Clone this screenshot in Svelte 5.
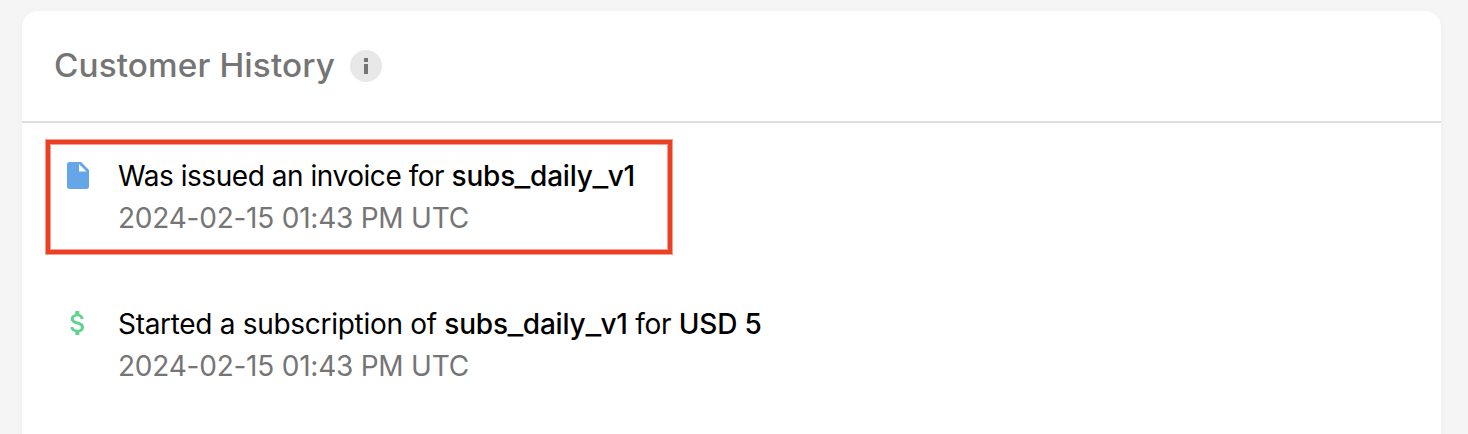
<script>
  const events = [
    {
      icon: 'invoice',
      highlighted: true,
      parts: [{ text: 'Was issued an invoice for ' }, { text: 'subs_daily_v1', strong: true }],
      time: '2024-02-15 01:43 PM UTC'
    },
    {
      icon: 'dollar',
      highlighted: false,
      parts: [
        { text: 'Started a subscription of ' },
        { text: 'subs_daily_v1', strong: true },
        { text: ' for ' },
        { text: 'USD 5', strong: true }
      ],
      time: '2024-02-15 01:43 PM UTC'
    }
  ];
</script>

<main class="page">
  <section class="card">
    <header class="header">
      <h2>Customer History</h2>
      <svg class="info" viewBox="0 0 32 32" aria-hidden="true">
        <circle cx="16" cy="16" r="16" fill="#e8e8e8" />
        <path d="M14 8h4v4h-4zM14 14h4v10h-4z" fill="#757575" />
      </svg>
    </header>
    <ul class="events">
      {#each events as event}
        <li class="event {event.icon}-event" class:highlighted={event.highlighted}>
          <span class="icon">
            {#if event.icon === 'invoice'}
              <svg class="invoice" viewBox="0 0 22 27" aria-hidden="true">
                <path
                  fill="#64a6e8"
                  fill-rule="evenodd"
                  d="M2.7 0H14l8 8v16.3A2.7 2.7 0 0 1 19.3 27H2.7A2.7 2.7 0 0 1 0 24.3V2.7A2.7 2.7 0 0 1 2.7 0ZM12 2v7.5h7.5Z"
                />
              </svg>
            {:else}
              <svg class="dollar" viewBox="0 0 14 24" aria-hidden="true">
                <path
                  fill="#5fd38d"
                  d="M7.73 10.53C4.7 9.75 3.73 8.93 3.73 7.67c0-1.45 1.35-2.47 3.6-2.47 2.37 0 3.25 1.13 3.33 2.8h2.95c-.1-2.3-1.5-4.4-4.28-5.08V0h-4v2.88C2.75 3.44.67 5.12.67 7.69c0 3.08 2.55 4.61 6.26 5.5 3.34.8 4 1.97 4 3.22 0 .92-.65 2.39-3.6 2.39-2.74 0-3.82-1.23-3.97-2.8H.43c.16 2.92 2.34 4.55 4.9 5.1V24h4v-2.87c2.6-.49 4.67-2 4.67-4.73 0-3.79-3.24-5.08-6.27-5.87Z"
                />
              </svg>
            {/if}
          </span>
          <div class="details">
            <p class="summary">{#each event.parts as part}{#if part.strong}<strong>{#each part.text.split('_') as word, i}{#if i > 0}<span class="underscore">_</span>{/if}{word}{/each}</strong>{:else}{part.text}{/if}{/each}</p>
            <p class="time">{event.time}</p>
          </div>
        </li>
      {/each}
    </ul>
  </section>
</main>

<style>
  :global(body) {
    margin: 0;
    background: #f5f5f5;
  }
  .page {
    box-sizing: border-box;
    height: 434px;
    padding: 11px 27px 0 22px;
    overflow: hidden;
    font-family: Inter, 'Liberation Sans', sans-serif;
  }
  .card {
    height: 480px;
    background: #fff;
    border-radius: 16px;
    box-shadow: 0 2px 8px rgba(0, 0, 0, 0.03);
  }
  .header {
    display: flex;
    align-items: center;
    box-sizing: border-box;
    height: 112px;
    gap: 16px;
    padding: 0 32px;
    border-bottom: 2px solid #dedede;
  }
  h2 {
    width: 280px;
    margin: 0;
    color: #757575;
    font-size: 32px;
    font-weight: 500;
    letter-spacing: 0.12px;
    line-height: 40px;
    white-space: nowrap;
    transform: scaleX(1.04);
    transform-origin: left;
  }
  .info {
    width: 32px;
    height: 32px;
  }
  .events {
    display: flex;
    flex-direction: column;
    gap: 34px;
    margin: 0;
    padding: 17px 24px;
    list-style: none;
  }
  .event {
    display: flex;
    box-sizing: border-box;
    width: 626px;
    height: 114px;
    padding: 17px 0 0 16px;
    border: 4px solid transparent;
    white-space: nowrap;
  }
  .highlighted {
    border-color: #eb4026;
    box-shadow:
      0 0 0 1px rgba(235, 64, 38, 0.5),
      inset 0 0 0 1px rgba(235, 64, 38, 0.5);
  }
  .icon {
    display: flex;
    flex: none;
    width: 52px;
  }
  .invoice {
    width: 22px;
    height: 27px;
    margin: 0.5px 0 0 1px;
  }
  .dollar {
    width: 14px;
    height: 24px;
    margin: 2px 0 0 4px;
  }
  p {
    margin: 0;
    font-size: 28px;
    line-height: 42px;
  }
  .details {
    margin-top: -6px;
  }
  .summary {
    color: #000;
    letter-spacing: -0.3px;
  }
  .invoice-event .summary {
    letter-spacing: -0.46px;
  }
  strong {
    font-weight: 500;
    letter-spacing: -0.2px;
  }
  .invoice-event strong {
    letter-spacing: -0.2px;
  }
  .underscore {
    display: inline-block;
    margin: 0 1.1px;
    transform: scaleX(1.22);
  }
  .time {
    color: #757575;
    letter-spacing: -0.23px;
  }
</style>
